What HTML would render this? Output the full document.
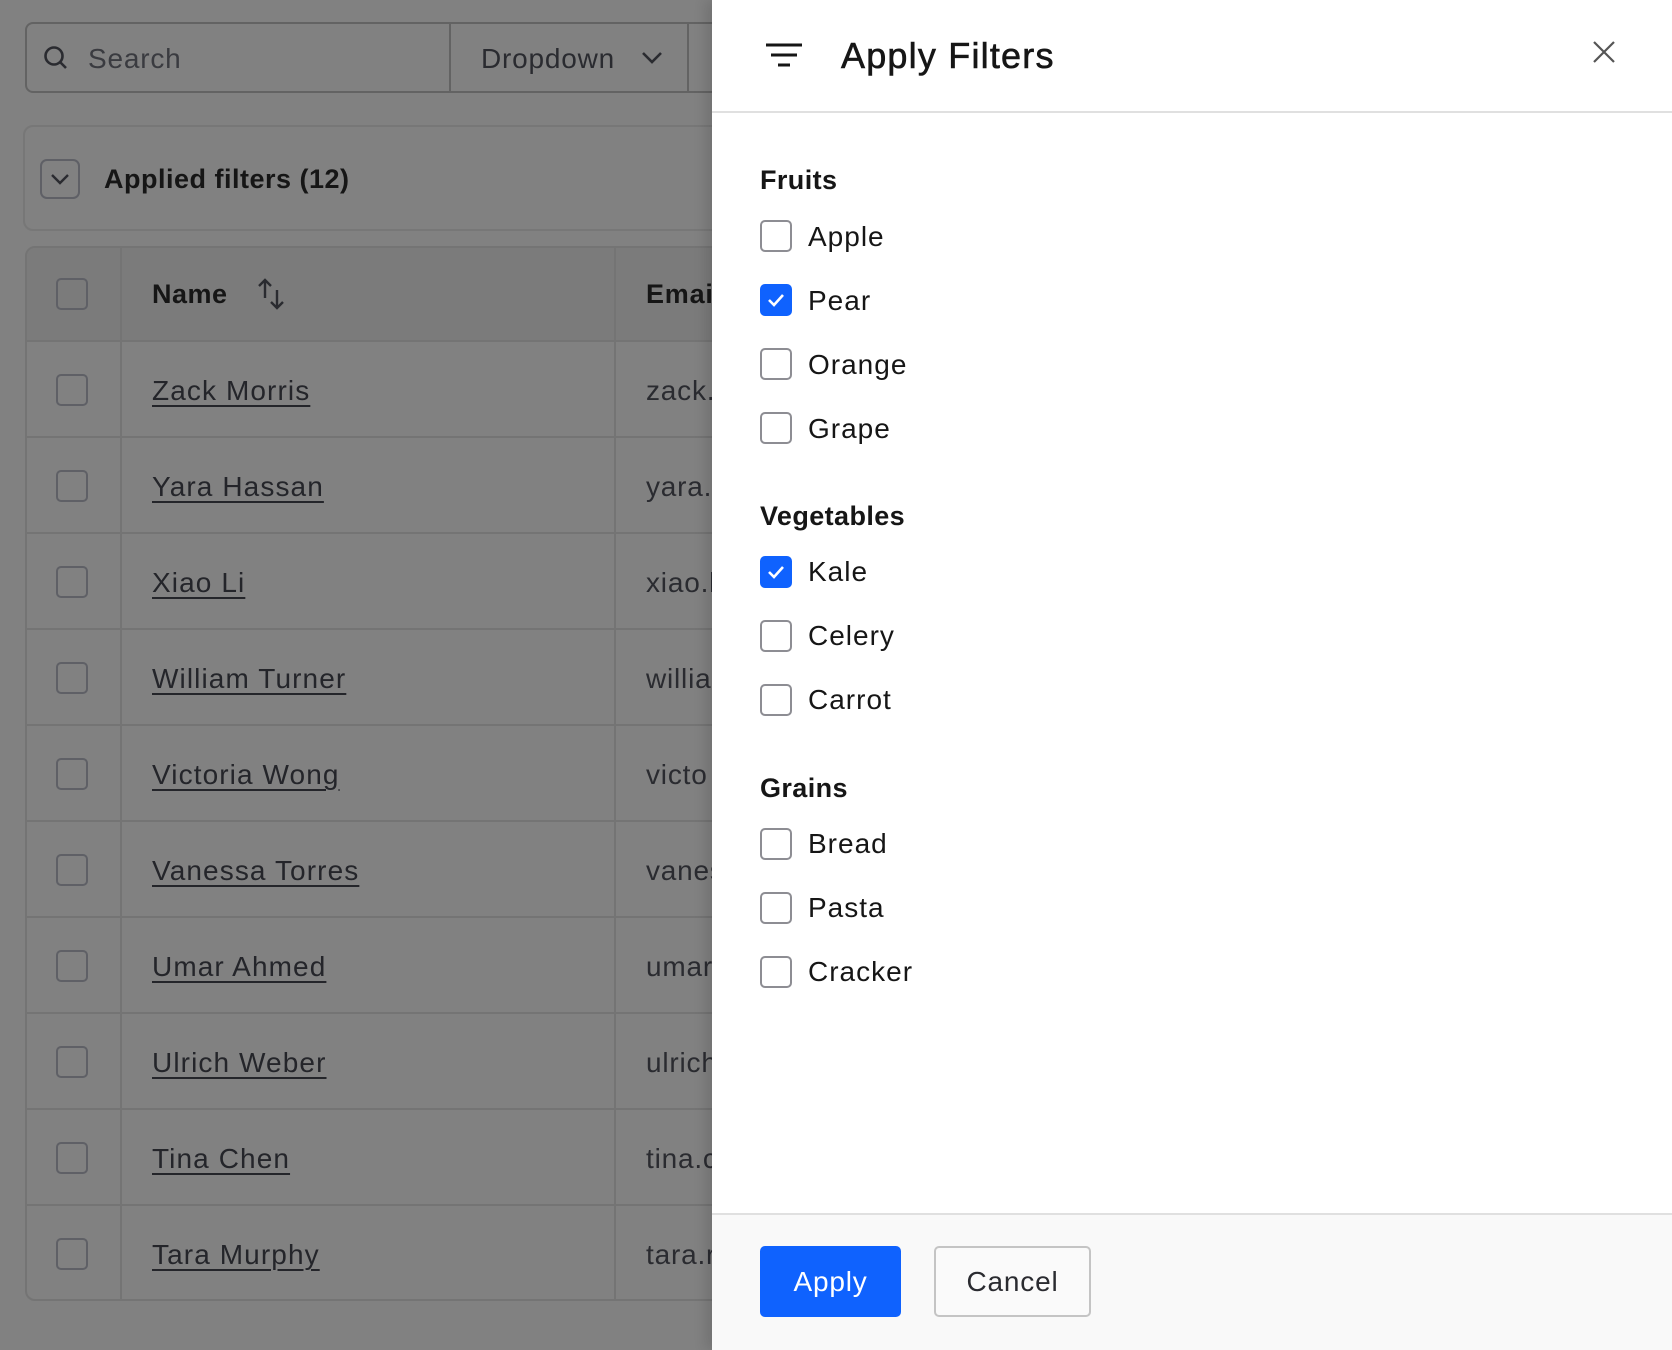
<!DOCTYPE html>
<html><head><meta charset="utf-8"><style>
*{box-sizing:border-box;margin:0;padding:0}
body{width:1672px;height:1350px;position:relative;overflow:hidden;background:#818181;font-family:"Liberation Sans",sans-serif;letter-spacing:0.8px}
.a{position:absolute}
.lt{color:#2a2b30;font-size:28px}
.cb{position:absolute;width:32px;height:32px;border:2px solid #5f6066;border-radius:5px}
.row{position:absolute;left:25px;width:700px;height:96px;border-top:2px solid #747474}
.nm{position:absolute;left:152px;font-size:28px;color:#24252a;text-decoration:underline;text-decoration-thickness:2px;text-underline-offset:5px;letter-spacing:1.1px}
.em{position:absolute;left:646px;font-size:28px;color:#2a2b30}
#panel{position:absolute;left:712px;top:0;width:960px;height:1350px;background:#fff;box-shadow:-6px 0 12px rgba(0,0,0,.12)}
.h{position:absolute;left:48px;font-size:27px;font-weight:bold;color:#161616;letter-spacing:0.4px}
.pc{position:absolute;left:48px;width:32px;height:32px;border:2px solid #8d8d93;border-radius:5px;background:#fff}
.pc.on{background:#0f62fe;border-color:#0f62fe}
.pl{position:absolute;left:96px;font-size:28px;color:#161616;letter-spacing:1px}
</style></head><body>
<div class="a" style="left:25px;top:22px;width:700px;height:71px;border:2px solid #636363;border-radius:8px"></div>
<svg class="a" style="left:42px;top:44px" width="28" height="28" viewBox="0 0 28 28"><circle cx="12" cy="12" r="8.5" fill="none" stroke="#2a2b30" stroke-width="2.6"/><path d="M18 18l6 6" stroke="#2a2b30" stroke-width="2.6"/></svg>
<div class="a lt" style="left:88px;top:43px;color:#3a3b40">Search</div>
<div class="a" style="left:449px;top:22px;width:2px;height:71px;background:#636363"></div>
<div class="a lt" style="left:481px;top:43px">Dropdown</div>
<svg class="a" style="left:640px;top:48px" width="24" height="20" viewBox="0 0 24 20"><path d="M3 5l9 9 9-9" fill="none" stroke="#2a2b30" stroke-width="2.6"/></svg>
<div class="a" style="left:687px;top:22px;width:2px;height:71px;background:#636363"></div>
<div class="a" style="left:23px;top:125px;width:720px;height:106px;border:2px solid #777;border-radius:10px"></div>
<div class="a" style="left:40px;top:159px;width:40px;height:40px;border:2px solid #5f6066;border-radius:7px"></div>
<svg class="a" style="left:48px;top:168px" width="24" height="22" viewBox="0 0 24 22"><path d="M4 7l8 8 8-8" fill="none" stroke="#2a2b30" stroke-width="2.4"/></svg>
<div class="a" style="left:104px;top:164px;font-size:27px;font-weight:bold;color:#161616;letter-spacing:0.5px">Applied filters (12)</div>
<div class="a" style="left:25px;top:246px;width:720px;height:1055px;border:2px solid #747474;border-radius:10px;overflow:hidden">
<div class="a" style="left:0;top:0;width:720px;height:94px;background:#7b7b7b"></div>
</div>
<div class="a" style="left:120px;top:248px;width:2px;height:1052px;background:#747474"></div>
<div class="a" style="left:614px;top:248px;width:2px;height:1052px;background:#747474"></div>
<div class="cb" style="left:56px;top:278px"></div>
<div class="a" style="left:152px;top:279px;font-size:27px;font-weight:bold;color:#161616;letter-spacing:0.5px">Name</div>
<svg class="a" style="left:256px;top:276px" width="32" height="36" viewBox="0 0 32 36"><path d="M9 22V4M3 10l6-6 6 6M21 14v18M15 26l6 6 6-6" fill="none" stroke="#2a2b30" stroke-width="2.4"/></svg>
<div class="a" style="left:646px;top:279px;font-size:27px;font-weight:bold;color:#161616">Email</div>
<div id="rows"></div>
<script>
var n=[["Zack Morris","zack."],["Yara Hassan","yara."],["Xiao Li","xiao.l"],["William Turner","willia"],["Victoria Wong","victo"],["Vanessa Torres","vanes"],["Umar Ahmed","umar"],["Ulrich Weber","ulrich"],["Tina Chen","tina.c"],["Tara Murphy","tara.r"]];
var h="";for(var i=0;i<n.length;i++){var t=340+i*96;h+='<div class="row" style="top:'+t+'px"></div><div class="cb" style="left:56px;top:'+(t+34)+'px"></div><div class="nm" style="top:'+(t+35)+'px">'+n[i][0]+'</div><div class="em" style="top:'+(t+35)+'px">'+n[i][1]+'</div>';}
document.getElementById("rows").innerHTML=h;
</script>
<div id="panel">
<svg class="a" style="left:52px;top:40px" width="40" height="30" viewBox="0 0 40 30"><path d="M2 5h36M7 15h26M14 25h12" stroke="#161616" stroke-width="3"/></svg>
<div class="a" style="left:129px;top:35px;font-size:36px;color:#161616;letter-spacing:1.2px;-webkit-text-stroke:0.6px #161616">Apply Filters</div>
<svg class="a" style="left:880px;top:40px" width="24" height="24" viewBox="0 0 24 24"><path d="M2 2l20 20M22 2L2 22" stroke="#555" stroke-width="2.2"/></svg>
<div class="a" style="left:0;top:111px;width:960px;height:2px;background:#e0e0e0"></div>

<div class="h" style="top:165px">Fruits</div>
<div class="pc" style="top:220px"></div><div class="pl" style="top:221px">Apple</div>
<div class="pc on" style="top:284px"><svg width="28" height="28" viewBox="0 0 28 28"><path d="M7 14l5 5 9-10" fill="none" stroke="#fff" stroke-width="2.6"/></svg></div><div class="pl" style="top:285px">Pear</div>
<div class="pc" style="top:348px"></div><div class="pl" style="top:349px">Orange</div>
<div class="pc" style="top:412px"></div><div class="pl" style="top:413px">Grape</div>

<div class="h" style="top:501px">Vegetables</div>
<div class="pc on" style="top:556px"><svg width="28" height="28" viewBox="0 0 28 28"><path d="M7 14l5 5 9-10" fill="none" stroke="#fff" stroke-width="2.6"/></svg></div><div class="pl" style="top:556px">Kale</div>
<div class="pc" style="top:620px"></div><div class="pl" style="top:620px">Celery</div>
<div class="pc" style="top:684px"></div><div class="pl" style="top:684px">Carrot</div>

<div class="h" style="top:773px">Grains</div>
<div class="pc" style="top:828px"></div><div class="pl" style="top:828px">Bread</div>
<div class="pc" style="top:892px"></div><div class="pl" style="top:892px">Pasta</div>
<div class="pc" style="top:956px"></div><div class="pl" style="top:956px">Cracker</div>

<div class="a" style="left:0;top:1213px;width:960px;height:137px;background:#f9f9f9;border-top:2px solid #e0e0e0"></div>
<div class="a" style="left:48px;top:1246px;width:141px;height:71px;background:#0f62fe;border-radius:5px;color:#fff;font-size:28px;text-align:center;line-height:71px">Apply</div>
<div class="a" style="left:222px;top:1246px;width:157px;height:71px;background:#fafafa;border:2px solid #c4c4c4;border-radius:5px;color:#2a2b30;font-size:28px;text-align:center;line-height:67px">Cancel</div>
</div>
</body></html>
